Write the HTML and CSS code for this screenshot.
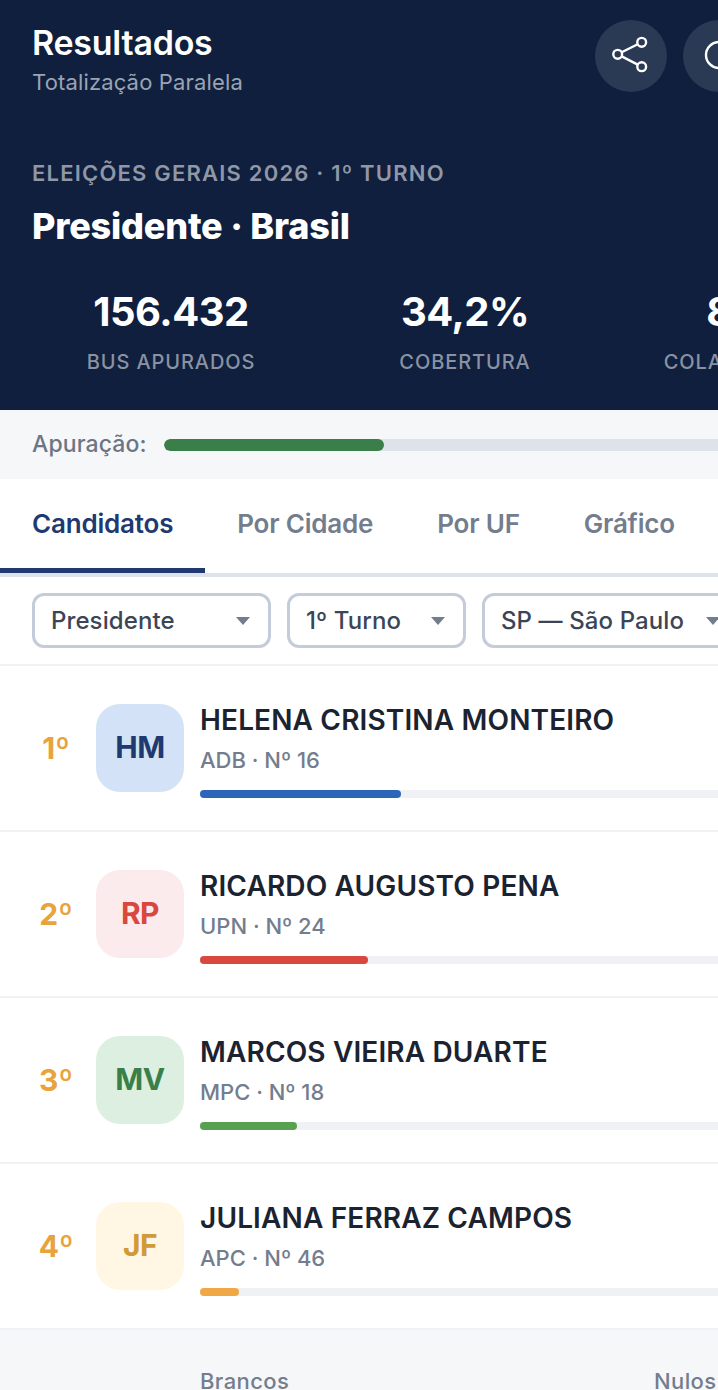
FILE: index.html
```html
<!DOCTYPE html>
<html lang="pt-BR">
<head>
    <meta charset="UTF-8">
    <meta name="viewport" content="width=device-width, initial-scale=1.0">
    <title>Resultados</title>
    <link rel="stylesheet" href="styles.css">
</head>
<body>
    <div class="page">
        <header class="hero">
            <div class="topbar">
                <div class="brand">
                    <h1 class="brand-title">Resultados</h1>
                    <p class="brand-sub">Totalização Paralela</p>
                </div>
                <div class="actions">
                    <button class="icon-btn" aria-label="Compartilhar">
                        <svg width="40" height="40" viewBox="0 0 40 40" fill="none" stroke="#fff" stroke-width="2.4">
                            <circle cx="30.7" cy="6.3" r="4.4"/>
                            <circle cx="6.7" cy="18.3" r="4.4"/>
                            <circle cx="30.7" cy="30.7" r="4.4"/>
                            <path d="M10.7 16.3 26.7 8.3M10.7 20.4 26.7 28.6"/>
                        </svg>
                    </button>
                    <button class="icon-btn" aria-label="Atualizar">
                        <svg width="40" height="40" viewBox="0 0 40 40" fill="none" stroke="#fff" stroke-width="2.4">
                            <circle cx="20" cy="19" r="13"/>
                        </svg>
                    </button>
                </div>
            </div>

            <p class="eyebrow">ELEIÇÕES GERAIS 2026 · 1º TURNO</p>
            <h2 class="race">Presidente · Brasil</h2>

            <div class="stats">
                <div class="stat">
                    <div class="stat-value">156.432</div>
                    <div class="stat-label">BUS APURADOS</div>
                </div>
                <div class="stat">
                    <div class="stat-value">34,2%</div>
                    <div class="stat-label">COBERTURA</div>
                </div>
                <div class="stat">
                    <div class="stat-value">8.421</div>
                    <div class="stat-label">COLABORADORES</div>
                </div>
            </div>
        </header>

        <div class="progress-row">
            <span class="progress-label">Apuração:</span>
            <div class="progress-track"><div class="progress-fill" style="width: 37.2%"></div></div>
        </div>

        <nav class="tabs">
            <a class="tab active">Candidatos</a>
            <a class="tab">Por Cidade</a>
            <a class="tab">Por UF</a>
            <a class="tab">Gráfico</a>
        </nav>

        <div class="filters">
            <div class="select select-cargo"><span>Presidente</span><i class="caret"></i></div>
            <div class="select select-turno"><span>1º Turno</span><i class="caret"></i></div>
            <div class="select select-uf"><span>SP — São Paulo</span><i class="caret"></i></div>
        </div>

        <ul class="candidates">
            <li class="candidate">
                <span class="rank">1º</span>
                <div class="avatar avatar-blue">HM</div>
                <div class="info">
                    <div class="name">HELENA CRISTINA MONTEIRO</div>
                    <div class="party">ADB · Nº 16</div>
                    <div class="bar"><div class="bar-fill fill-blue" style="width: 36.2%"></div></div>
                </div>
            </li>
            <li class="candidate">
                <span class="rank">2º</span>
                <div class="avatar avatar-red">RP</div>
                <div class="info">
                    <div class="name">RICARDO AUGUSTO PENA</div>
                    <div class="party">UPN · Nº 24</div>
                    <div class="bar"><div class="bar-fill fill-red" style="width: 30.3%"></div></div>
                </div>
            </li>
            <li class="candidate">
                <span class="rank">3º</span>
                <div class="avatar avatar-green">MV</div>
                <div class="info">
                    <div class="name">MARCOS VIEIRA DUARTE</div>
                    <div class="party">MPC · Nº 18</div>
                    <div class="bar"><div class="bar-fill fill-green" style="width: 17.5%"></div></div>
                </div>
            </li>
            <li class="candidate">
                <span class="rank">4º</span>
                <div class="avatar avatar-yellow">JF</div>
                <div class="info">
                    <div class="name">JULIANA FERRAZ CAMPOS</div>
                    <div class="party">APC · Nº 46</div>
                    <div class="bar"><div class="bar-fill fill-yellow" style="width: 7%"></div></div>
                </div>
            </li>
        </ul>

        <div class="totals">
            <span class="total-item">Brancos</span>
            <span class="total-item">Nulos</span>
        </div>
    </div>
</body>
</html>
```

FILE: styles.css
```css
html, body {
    margin: 0;
    height: 100%;
    overflow: hidden;
    background: #fff;
}
body {
    font-family: Inter, "Liberation Sans", sans-serif;
}
h1, h2, p, ul {
    margin: 0;
    padding: 0;
}
.page {
    width: 787px;
}

/* header */
.hero {
    background: #0f1f3d;
    height: 410px;
    box-sizing: border-box;
    padding: 20px 32px 0;
    color: #fff;
}
.topbar {
    display: flex;
    justify-content: space-between;
    align-items: flex-start;
}
.brand-title {
    font-size: 34px;
    font-weight: 600;
    line-height: 46px;
    letter-spacing: -0.25px;
}
.brand-sub {
    margin-top: 1px;
    font-size: 22px;
    line-height: 30px;
    letter-spacing: 0.15px;
    color: #9aa3b3;
}
.actions {
    display: flex;
    gap: 16px;
}
.icon-btn {
    width: 72px;
    height: 72px;
    padding: 0;
    border: none;
    border-radius: 50%;
    background: #2a3a55;
    display: flex;
    align-items: center;
    justify-content: center;
}
.eyebrow {
    margin-top: 61px;
    font-size: 22px;
    line-height: 30px;
    font-weight: 600;
    letter-spacing: 1.2px;
    color: #9097a6;
}
.race {
    margin-top: 16px;
    font-size: 36px;
    line-height: 44px;
    font-weight: 800;
    letter-spacing: -0.2px;
}
.stats {
    display: grid;
    grid-template-columns: repeat(3, 294px);
    margin: 39px -8px 0;
    text-align: center;
}
.stat-value {
    font-size: 40px;
    line-height: 50px;
    font-weight: 700;
    letter-spacing: -0.5px;
}
.stat-label {
    margin-top: 11px;
    font-size: 20px;
    line-height: 28px;
    font-weight: 500;
    letter-spacing: 0.9px;
    color: #8a92a2;
    white-space: nowrap;
}

/* apuracao */
.progress-row {
    display: flex;
    align-items: center;
    gap: 17px;
    height: 69px;
    padding: 0 32px;
    background: #f6f7f9;
}
.progress-label {
    margin-top: -2px;
    font-size: 23px;
    font-weight: 500;
    letter-spacing: 0.1px;
    color: #6c7585;
}
.progress-track {
    flex: 1;
    height: 12px;
    border-radius: 6px;
    background: #dee2ea;
    overflow: hidden;
}
.progress-fill {
    height: 100%;
    border-radius: 6px;
    background: #3a7f4a;
}

/* tabs */
.tabs {
    display: flex;
    border-bottom: 4px solid #dee2ea;
    background: #fff;
}
.tab {
    height: 94px;
    box-sizing: border-box;
    padding: 0 32px;
    display: flex;
    align-items: center;
    font-size: 26px;
    font-weight: 600;
    letter-spacing: -0.2px;
    color: #737d8d;
    border-bottom: 5px solid transparent;
}
.tab.active {
    color: #1e3a70;
    border-bottom-color: #1e3a70;
}

/* filters */
.filters {
    display: flex;
    gap: 16px;
    padding: 16px 32px;
    border-bottom: 2px solid #f0f1f5;
}
.select {
    flex: none;
    height: 55px;
    box-sizing: border-box;
    border: 3px solid #c5ccd9;
    border-radius: 12px;
    padding: 0 18px 0 16px;
    display: flex;
    align-items: center;
    justify-content: space-between;
    font-size: 24px;
    font-weight: 500;
    letter-spacing: 0.1px;
    color: #3c4555;
    white-space: nowrap;
}
.select-cargo { width: 239px; }
.select-turno { width: 179px; }
.select-uf { width: 259px; }
.caret {
    width: 0;
    height: 0;
    border-left: 7px solid transparent;
    border-right: 7px solid transparent;
    border-top: 8px solid #737d8d;
}

/* candidates */
.candidates {
    list-style: none;
}
.candidate {
    display: flex;
    align-items: center;
    gap: 16px;
    height: 166px;
    box-sizing: border-box;
    padding: 0 32px;
    border-bottom: 2px solid #f0f1f5;
}
.rank {
    width: 48px;
    flex: none;
    text-align: center;
    font-size: 30px;
    font-weight: 700;
    color: #e8a33d;
}
.avatar {
    width: 88px;
    height: 88px;
    box-sizing: border-box;
    padding-bottom: 2px;
    flex: none;
    border-radius: 24px;
    display: flex;
    align-items: center;
    justify-content: center;
    font-size: 30px;
    font-weight: 700;
    letter-spacing: -0.5px;
}
.avatar-blue { background: #d3e2f6; color: #1e3a70; }
.avatar-red { background: #fcebec; color: #d9483f; }
.avatar-green { background: #dcefe0; color: #3a7f4a; }
.avatar-yellow { background: #fff7e3; color: #d09a3a; }
.info {
    flex: 1;
    margin-top: 4px;
}
.name {
    font-size: 28px;
    line-height: 36px;
    font-weight: 600;
    letter-spacing: 0.15px;
    color: #1b2230;
}
.party {
    margin-top: 7px;
    font-size: 22px;
    line-height: 30px;
    font-weight: 500;
    color: #737d8d;
}
.bar {
    margin-top: 15px;
    height: 8px;
    border-radius: 4px;
    background: #f0f1f5;
}
.bar-fill {
    height: 100%;
    border-radius: 4px;
}
.fill-blue { background: #2c66b8; }
.fill-red { background: #d9483f; }
.fill-green { background: #58a14f; }
.fill-yellow { background: #f0a844; }

/* totals */
.totals {
    display: grid;
    grid-template-columns: 454px auto;
    padding: 36px 0 0 200px;
    height: 60px;
    background: #f6f7f9;
}
.total-item {
    font-size: 22px;
    line-height: 30px;
    font-weight: 500;
    letter-spacing: 0.4px;
    color: #737d8d;
}
```
